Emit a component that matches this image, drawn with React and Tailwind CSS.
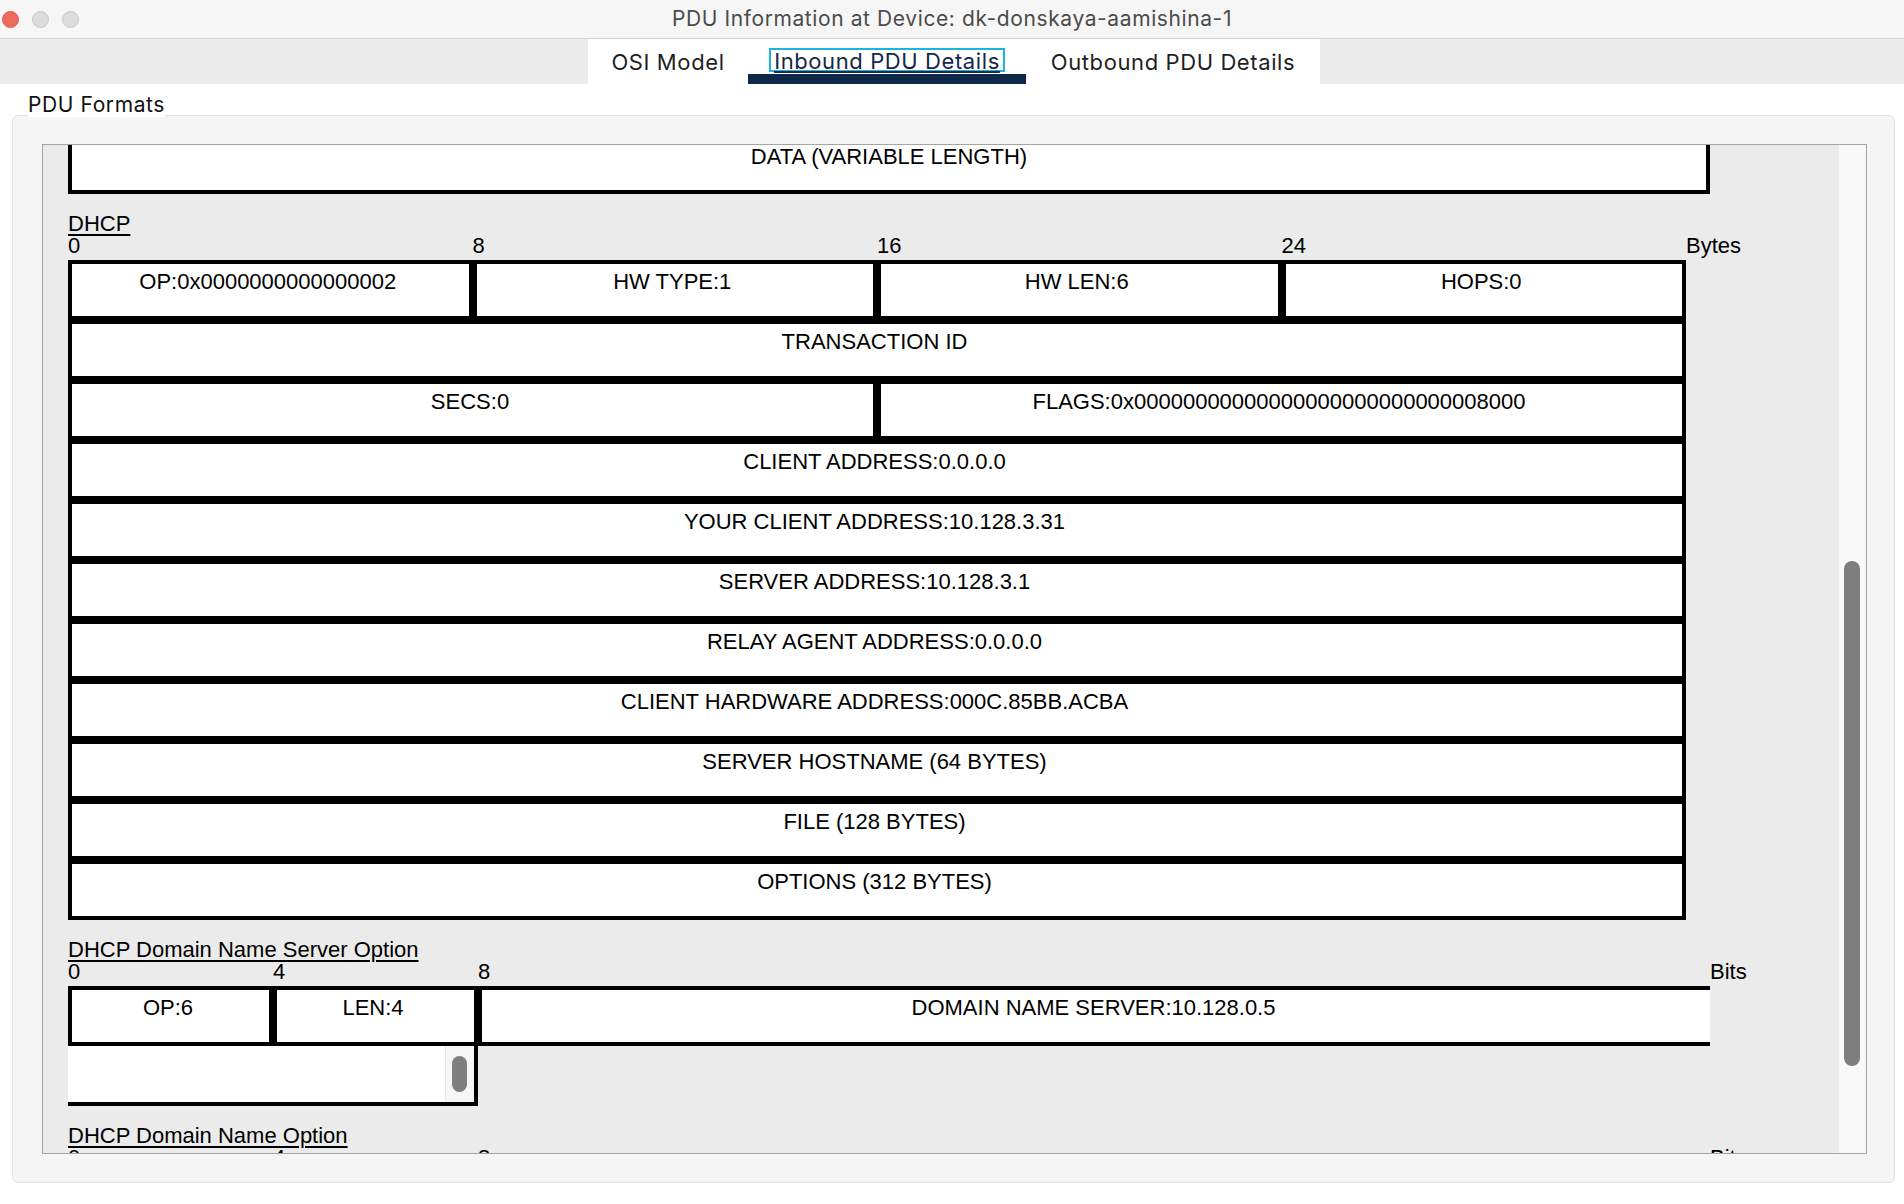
import React from 'react'

// PDU details window (Packet Tracer style): tabs on top, scrolled "PDU Formats" pane below.
const ui = { fontFamily: 'Inter, "Noto Sans", sans-serif' }
const mono = { fontFamily: '"Liberation Sans", Arial, sans-serif' }

const dhcpRows = [
  ['OP:0x0000000000000002', 'HW TYPE:1', 'HW LEN:6', 'HOPS:0'],
  ['TRANSACTION ID'],
  ['SECS:0', 'FLAGS:0x00000000000000000000000000008000'],
  ['CLIENT ADDRESS:0.0.0.0'],
  ['YOUR CLIENT ADDRESS:10.128.3.31'],
  ['SERVER ADDRESS:10.128.3.1'],
  ['RELAY AGENT ADDRESS:0.0.0.0'],
  ['CLIENT HARDWARE ADDRESS:000C.85BB.ACBA'],
  ['SERVER HOSTNAME (64 BYTES)'],
  ['FILE (128 BYTES)'],
  ['OPTIONS (312 BYTES)'],
]

function Cell({ children, className = '' }) {
  return (
    <div className={`h-[60px] border-4 border-black bg-white pr-[5px] pt-[6px] text-center leading-[24px] ${className}`}>
      {children}
    </div>
  )
}

function DhcpRow({ fields }) {
  const cols = fields.length === 4 ? 'grid-cols-4' : fields.length === 2 ? 'grid-cols-2' : 'grid-cols-1'
  return (
    <div className={`grid w-[1618px] ${cols}`}>
      {fields.map((f) => (
        <Cell key={f}>{f}</Cell>
      ))}
    </div>
  )
}

function OptionScale({ unit }) {
  return (
    <div className="relative -top-[2px] flex leading-[24px]">
      <span className="w-[205px]">0</span>
      <span className="w-[205px]">4</span>
      <span className="w-[1232px]">8</span>
      <span>{unit}</span>
    </div>
  )
}

function Label({ children }) {
  return <div className="leading-[24px] underline underline-offset-[3px]">{children}</div>
}

export default function App() {
  return (
    <div className="relative h-[1204px] w-[1904px] overflow-hidden bg-white" style={ui}>
      {/* title bar */}
      <div className="grid h-[39px] grid-cols-[1fr_auto_1fr] items-center border-b border-[#d3d3d3] bg-[#f6f6f6]">
        <div className="flex items-center gap-[13px] pl-[2px]">
          <span className="h-[17px] w-[17px] rounded-full border border-[#de5a4f] bg-[#ed6a5e]" />
          <span className="h-[17px] w-[17px] rounded-full border border-[#c9c9c9] bg-[#dcdcdc]" />
          <span className="h-[17px] w-[17px] rounded-full border border-[#c9c9c9] bg-[#dcdcdc]" />
        </div>
        <div className="text-[21px] tracking-[0.6px] text-[#4b4b4b]">PDU Information at Device: dk-donskaya-aamishina-1</div>
        <div />
      </div>

      {/* tabs */}
      <div className="flex h-[45px] bg-[#ececec] pl-[588px]">
        <div className="flex w-[732px] bg-white text-[22px] tracking-[0.6px] text-[#1f1f1f]">
          <div className="w-[160px] pt-[11px] text-center leading-[24px]">OSI Model</div>
          <div className="flex w-[278px] flex-col items-center">
            <div className="flex h-[35px] items-start pt-[11px]">
              <span className="block h-[20px] px-[3px] leading-[20px] text-[#14284a] outline-2 outline-[#1bb4e2]">
                <span className="relative top-[1px] underline underline-offset-[2px]">Inbound PDU Details</span>
              </span>
            </div>
            <div className="h-[10px] w-full bg-[#0f2849]" />
          </div>
          <div className="w-[294px] pt-[11px] text-center leading-[24px]">Outbound PDU Details</div>
        </div>
      </div>

      {/* PDU Formats group */}
      <div className="h-[31px] pl-[28px] pt-[8px]">
        <span className="relative z-10 bg-white text-[21px] leading-[26px] tracking-[0.6px] text-[#111]">PDU Formats</span>
      </div>
      <div className="ml-[12px] h-[1068px] w-[1883px] rounded-[6px] border border-[#e3e3e3] bg-[#f5f5f5] pl-[29px] pt-[28px]">
        <div className="flex h-[1010px] w-[1825px] border border-[#a5a5a5]">
          <div className="flex-1 overflow-hidden bg-[#ebebeb] pl-[25px] text-[22px] text-black" style={mono}>
            {/* tail of previous PDU, scrolled off the top */}
            <div className="h-[49px] w-[1642px] border-x-4 border-b-4 border-black bg-white text-center leading-[24px]">
              DATA (VARIABLE LENGTH)
            </div>

            <div className="mt-[18px]">
              <Label>DHCP</Label>
              <div className="relative -top-[2px] flex leading-[24px]">
                <div className="grid w-[1618px] grid-cols-4">
                  <span>0</span>
                  <span>8</span>
                  <span>16</span>
                  <span>24</span>
                </div>
                <span>Bytes</span>
              </div>
              {dhcpRows.map((r) => (
                <DhcpRow key={r[0]} fields={r} />
              ))}
            </div>

            <div className="mt-[18px]">
              <Label>DHCP Domain Name Server Option</Label>
              <OptionScale unit="Bits" />
              <div className="flex">
                <Cell className="w-[205px]">OP:6</Cell>
                <Cell className="w-[205px]">LEN:4</Cell>
                <div className="h-[60px] w-[1232px] border-y-4 border-l-4 border-black bg-white pr-[5px] pt-[6px] text-center leading-[24px]">
                  DOMAIN NAME SERVER:10.128.0.5
                </div>
              </div>
              <div className="flex h-[60px] w-[410px] border-r-4 border-b-4 border-black bg-white">
                <div className="flex-1" />
                <div className="w-[29px] border-l border-[#e6e6e6] bg-[#f6f6f6] pl-[6px] pt-[10px]">
                  <div className="h-[36px] w-[15px] rounded-full bg-[#7f7f7f]" />
                </div>
              </div>
            </div>

            <div className="mt-[18px]">
              <Label>DHCP Domain Name Option</Label>
              <OptionScale unit="Bits" />
            </div>
          </div>

          {/* vertical scrollbar */}
          <div className="w-[28px] border-l border-[#ececec] bg-[#f9f9f9] pl-[5px] pt-[416px]">
            <div className="h-[505px] w-[16px] rounded-full bg-[#7e7e7e]" />
          </div>
        </div>
      </div>
    </div>
  )
}
